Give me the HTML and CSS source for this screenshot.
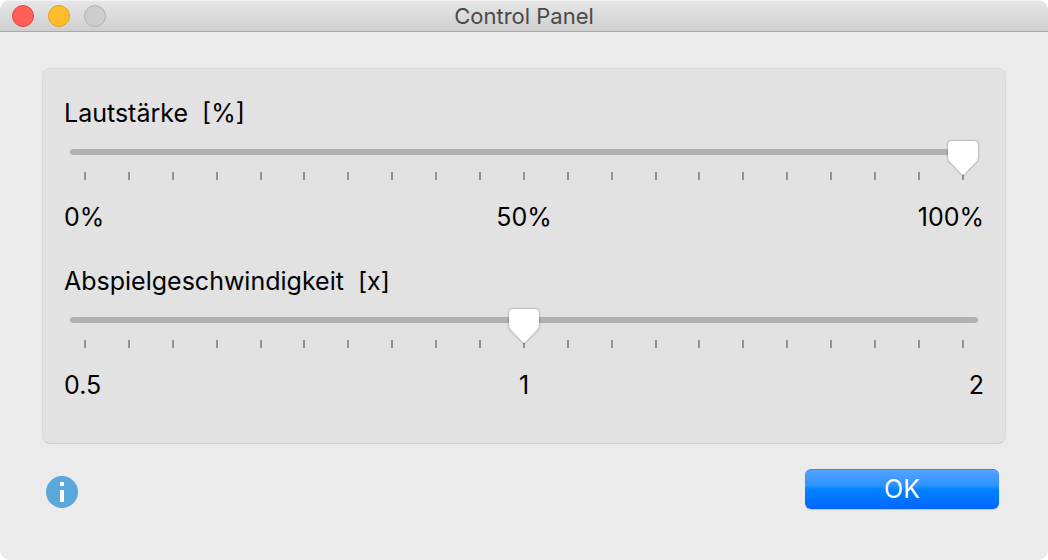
FILE: index.html
```html
<!DOCTYPE html>
<html lang="de">
<head>
<meta charset="utf-8">
<title>Control Panel</title>
<link rel="stylesheet" href="styles.css">
</head>
<body>
<div class="window">
  <header class="titlebar">
    <div class="lights">
      <button class="light light-close" aria-label="Close"></button>
      <button class="light light-minimize" aria-label="Minimize"></button>
      <button class="light light-zoom" aria-label="Zoom" disabled></button>
    </div>
    <h1 class="title">Control Panel</h1>
  </header>
  <main class="content">
    <section class="group">
      <div class="field">
        <label class="label" for="volume">Lautstärke&nbsp; [%]</label>
        <div class="slider">
          <div class="ticks"><i></i><i></i><i></i><i></i><i></i><i></i><i></i><i></i><i></i><i></i><i></i><i></i><i></i><i></i><i></i><i></i><i></i><i></i><i></i><i></i><i></i></div>
          <input class="range" id="volume" type="range" min="0" max="100" value="100">
        </div>
        <div class="scale"><span>0%</span><span>50%</span><span>100%</span></div>
      </div>
      <div class="field">
        <label class="label" for="speed">Abspielgeschwindigkeit&nbsp; [x]</label>
        <div class="slider">
          <div class="ticks"><i></i><i></i><i></i><i></i><i></i><i></i><i></i><i></i><i></i><i></i><i></i><i></i><i></i><i></i><i></i><i></i><i></i><i></i><i></i><i></i><i></i></div>
          <input class="range" id="speed" type="range" min="-10" max="10" value="0">
        </div>
        <div class="scale"><span>0.5</span><span>1</span><span>2</span></div>
      </div>
    </section>
    <footer class="footer">
      <button class="info" aria-label="Info">
        <svg width="32" height="32" viewBox="0 0 32 32"><circle cx="16" cy="16" r="16" fill="#5aa8d9"/><path d="M14 6h4v4h-4zM14 14h4v12h-4z" fill="#fff"/></svg>
      </button>
      <button class="ok">OK</button>
    </footer>
  </main>
</div>
</body>
</html>
```
FILE: styles.css
```css
* { box-sizing: border-box; }
body {
  margin: 0;
  background: #fff;
  color: #000;
  font: 25px/32px Inter, "Liberation Sans", sans-serif;
}
button { padding: 0; border: 0; font: inherit; }
.window {
  min-height: 100vh;
  background: #ebebeb;
  border-radius: 10px;
  overflow: hidden;
}
.titlebar {
  display: grid;
  grid-template-columns: 1fr auto 1fr;
  align-items: center;
  height: 32px;
  padding: 0 12px;
  background: linear-gradient(#e6e6e6, #cfcfcf);
  border-top: 1px solid #f4f4f4;
  border-bottom: 1px solid #a9a9a9;
}
.lights { display: flex; gap: 14px; }
.light { width: 22px; height: 22px; border: 1px solid; border-radius: 50%; }
.light-close { background: #ff5f57; border-color: #e24640; }
.light-minimize { background: #ffbd2e; border-color: #dfa023; }
.light-zoom { background: #cdcdcd; border-color: #b0b0b0; }
.title { margin: 0; color: #4a4a4a; font-size: 22px; font-weight: 400; line-height: 30px; }
.content { padding: 36px 42px; }
.group {
  display: flex;
  flex-direction: column;
  gap: 32px;
  padding: 28px 21px 42px;
  background: #e2e2e2;
  border: 1px solid #dadada;
  border-bottom-color: #cecece;
  border-radius: 8px;
}
.field { display: flex; flex-direction: column; }
.label { align-self: flex-start; }
.slider { display: grid; height: 72px; padding: 6px 6px 0; }
.ticks, .range { grid-area: 1 / 1; }
.ticks {
  display: flex;
  justify-content: space-between;
  margin: 37px 14px 0;
}
.ticks i { width: 2px; height: 8px; background: #929292; }
.range {
  z-index: 1;
  width: 100%;
  height: 34px;
  margin: 0;
  background: none;
  -webkit-appearance: none;
  appearance: none;
}
.range::-webkit-slider-runnable-track { height: 6px; background: #b0b0b0; border-radius: 3px; }
.range::-webkit-slider-thumb {
  -webkit-appearance: none;
  width: 30px;
  height: 34px;
  margin-top: -8px;
  border: 0;
  background: url("data:image/svg+xml,%3Csvg xmlns='http://www.w3.org/2000/svg' viewBox='0 0 30 34'%3E%3Cpath d='M4 0H26Q30 0 30 4V16Q30 19 28 21L16 33.500Q15 34 14 33.500L2 21Q0 19 0 16V4Q0 0 4 0Z' fill='%23fff'/%3E%3C/svg%3E") no-repeat;
  filter: drop-shadow(0 0 1px rgb(0 0 0 / 45%));
}
.scale { display: grid; grid-template-columns: 1fr 1fr 1fr; }
.scale span:nth-child(2) { text-align: center; }
.scale span:nth-child(3) { text-align: right; }
.footer {
  display: flex;
  align-items: center;
  justify-content: space-between;
  padding: 25px 7px 0 4px;
}
.info { display: flex; margin-top: 6px; background: none; }
.ok {
  width: 194px;
  height: 40px;
  padding-bottom: 2px;
  border-radius: 6px;
  color: #fff;
  background: linear-gradient(#55a3ff, #2e92ff 40%, #0084ff 50%, #0064ff);
  border-top: 1px solid #2c8cf5;
  box-shadow: 0 1px 1px rgb(0 0 0 / 15%);
}
```
